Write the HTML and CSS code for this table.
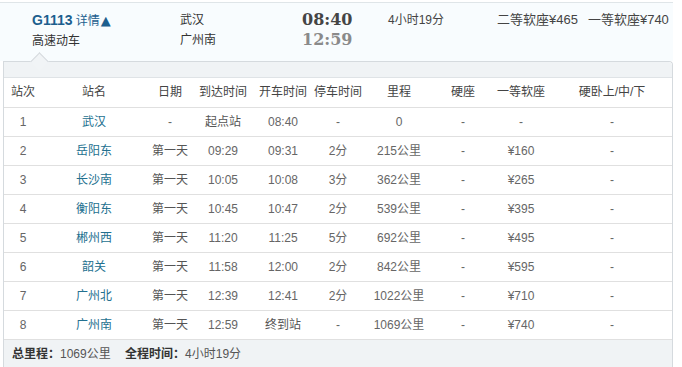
FILE: index.html
```html
<!DOCTYPE html>
<html lang="zh-CN">
<head>
<meta charset="utf-8">
<title>G1113</title>
<link rel="stylesheet" href="styles.css">
</head>
<body>
<div class="train">
  <div class="summary">
    <div class="col col-train">
      <div><span class="code">G1113</span> <span class="detail">详情<span class="tri">▲</span></span></div>
      <div class="type">高速动车</div>
    </div>
    <div class="col col-station">
      <div>武汉</div>
      <div>广州南</div>
    </div>
    <div class="col col-time">
      <div class="t-dep">08:40</div>
      <div class="t-arr">12:59</div>
    </div>
    <div class="col col-dur">
      <div>4小时19分</div>
    </div>
    <div class="col col-price">
      <span>二等软座¥465</span>
      <span>一等软座¥740</span>
    </div>
  </div>
  <div class="panel">
    <span class="pointer"></span>
    <div class="band"></div>
    <table class="stops">
      <colgroup>
        <col class="w1"><col class="w2"><col class="w3"><col class="w4"><col class="w5">
        <col class="w6"><col class="w7"><col class="w8"><col class="w9"><col class="w10">
      </colgroup>
      <thead>
        <tr><th>站次</th><th>站名</th><th>日期</th><th>到达时间</th><th>开车时间</th><th>停车时间</th><th>里程</th><th>硬座</th><th>一等软座</th><th>硬卧上/中/下</th></tr>
      </thead>
      <tbody>
        <tr><td>1</td><td class="st">武汉</td><td>-</td><td class="cn">起点站</td><td>08:40</td><td>-</td><td>0</td><td>-</td><td>-</td><td>-</td></tr>
        <tr><td>2</td><td class="st">岳阳东</td><td class="cn">第一天</td><td>09:29</td><td>09:31</td><td>2分</td><td>215公里</td><td>-</td><td>¥160</td><td>-</td></tr>
        <tr><td>3</td><td class="st">长沙南</td><td class="cn">第一天</td><td>10:05</td><td>10:08</td><td>3分</td><td>362公里</td><td>-</td><td>¥265</td><td>-</td></tr>
        <tr><td>4</td><td class="st">衡阳东</td><td class="cn">第一天</td><td>10:45</td><td>10:47</td><td>2分</td><td>539公里</td><td>-</td><td>¥395</td><td>-</td></tr>
        <tr><td>5</td><td class="st">郴州西</td><td class="cn">第一天</td><td>11:20</td><td>11:25</td><td>5分</td><td>692公里</td><td>-</td><td>¥495</td><td>-</td></tr>
        <tr><td>6</td><td class="st">韶关</td><td class="cn">第一天</td><td>11:58</td><td>12:00</td><td>2分</td><td>842公里</td><td>-</td><td>¥595</td><td>-</td></tr>
        <tr><td>7</td><td class="st">广州北</td><td class="cn">第一天</td><td>12:39</td><td>12:41</td><td>2分</td><td>1022公里</td><td>-</td><td>¥710</td><td>-</td></tr>
        <tr><td>8</td><td class="st">广州南</td><td class="cn">第一天</td><td>12:59</td><td class="cn">终到站</td><td>-</td><td>1069公里</td><td>-</td><td>¥740</td><td>-</td></tr>
      </tbody>
    </table>
    <div class="foot">
      <b>总里程：</b><span>1069公里</span>
      <b class="gap">全程时间：</b><span>4小时19分</span>
    </div>
  </div>
</div>
</body>
</html>
```

FILE: styles.css
```css
* { box-sizing: border-box; }
html, body { margin: 0; padding: 0; background: #ffffff; }
body {
  font-family: "Liberation Sans", "Noto Sans CJK SC", sans-serif;
  font-size: 12px;
  color: #333;
}
.train { width: 673px; }

.summary {
  margin-top: 2px;
  border-top: 1px solid #dfe5e8;
  background: #f8fcfe;
  height: 59px;
  padding: 7px 0 0 32px;
  display: flex;
  line-height: 20px;
}
.col-train { width: 148px; }
.col-station { width: 122px; color: #333; }
.col-time { width: 86px; }
.col-dur { width: 109px; color: #444; }
.col-price { display: flex; gap: 10px; font-size: 13px; color: #444; }

.code { font-size: 14px; font-weight: bold; color: #1d5f8e; }
.detail { color: #1d5f8e; font-size: 12px; }
.tri { font-family: "DejaVu Sans", sans-serif; font-size: 13px; margin-left: 1px; }
.type { color: #333; }

.t-dep, .t-arr {
  font-family: "DejaVu Serif", "Liberation Serif", serif;
  font-weight: bold;
  font-size: 16px;
  line-height: 20px;
}
.t-dep { color: #454545; }
.t-arr { color: #8a8a8a; }

.panel {
  position: relative;
  margin-left: 3px;
  width: 670px;
  border: 1px solid #d5dade;
  border-bottom: none;
  border-top-right-radius: 4px;
}
.pointer {
  position: absolute;
  left: 29px;
  top: -7px;
  width: 13px;
  height: 13px;
  background: #f1f4f6;
  border-top: 1px solid #d5dade;
  border-left: 1px solid #d5dade;
  transform: rotate(45deg);
}
.band {
  height: 16px;
  background: #f0f3f5;
  border-top-right-radius: 4px;
  border-bottom: 1px solid #dfe3e6;
}
.stops {
  width: 668px;
  border-collapse: collapse;
  table-layout: fixed;
  background: #fff;
}
.w1 { width: 38px; } .w2 { width: 104px; } .w3 { width: 48px; } .w4 { width: 58px; }
.w5 { width: 62px; } .w6 { width: 48px; } .w7 { width: 74px; } .w8 { width: 54px; }
.w9 { width: 62px; } .w10 { width: 120px; }

.stops th, .stops td {
  height: 29px;
  padding: 0;
  text-align: center;
  white-space: nowrap;
  border-bottom: 1px solid #e0e0e0;
  font-weight: normal;
  line-height: 16px;
}
.stops th { color: #444; }
.stops td { color: #666; }
.stops td.cn { color: #555; }
.stops td.st { color: #23708f; }

.foot {
  height: 28px;
  background: #f0f3f5;
  padding-left: 8px;
  line-height: 28px;
  color: #555;
}
.foot b { color: #333; font-weight: bold; }
.foot .gap { margin-left: 11px; }
```
